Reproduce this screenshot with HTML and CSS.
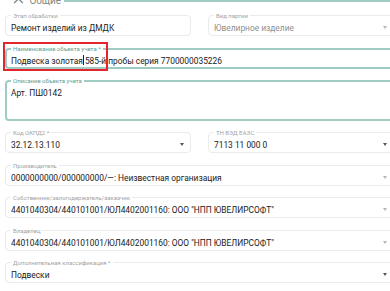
FILE: index.html
```html
<!DOCTYPE html>
<html lang="ru">
<head>
<meta charset="UTF-8">
<meta name="viewport" content="width=device-width, initial-scale=1.0">
<title>Общие</title>
<link rel="stylesheet" href="styles.css">
</head>
<body>

<fieldset class="section">
    <legend class="section-title">
        <svg class="chevron" viewBox="0 0 12 8" width="11" height="7"><path d="M1 7 L6 2 L11 7" fill="none" stroke="#7a8a86" stroke-width="1.6"/></svg>
        Общие
    </legend>

    <div class="form">
        <div class="field">
            <span class="label">Этап обработки</span>
            <div class="value">Ремонт изделий из ДМДК</div>
        </div>
        <div class="field select disabled">
            <span class="label">Вид партии</span>
            <div class="value">Ювелирное изделие</div>
            <span class="arrow"></span>
        </div>

        <div class="field wide focused">
            <span class="label">Наименование объекта учета *</span>
            <div class="value">Подвеска золотая<span class="caret"></span>585-й пробы серия 7700000035226</div>
            <div class="highlight"></div>
        </div>

        <div class="field wide focused textarea">
            <span class="label">Описание объекта учета</span>
            <div class="value">Арт. ПШ0142</div>
        </div>

        <div class="field select required">
            <span class="label">Код ОКПД2 *</span>
            <div class="value">32.12.13.110</div>
            <span class="arrow"></span>
        </div>
        <div class="field select required">
            <span class="label">ТН ВЭД ЕАЭС</span>
            <div class="value">7113 11 000 0</div>
            <span class="arrow"></span>
        </div>

        <div class="field wide select">
            <span class="label">Производитель</span>
            <div class="value">0000000000/000000000/—: Неизвестная организация</div>
            <span class="arrow"></span>
        </div>

        <div class="field wide select">
            <span class="label">Собственник/залогодержатель/заказчик</span>
            <div class="value">4401040304/440101001/ЮЛ4402001160: ООО "НПП ЮВЕЛИРСОФТ"</div>
            <span class="arrow"></span>
        </div>

        <div class="field wide select">
            <span class="label">Владелец</span>
            <div class="value">4401040304/440101001/ЮЛ4402001160: ООО "НПП ЮВЕЛИРСОФТ"</div>
            <span class="arrow"></span>
        </div>

        <div class="field wide select required">
            <span class="label">Дополнительная классификация *</span>
            <div class="value">Подвески</div>
            <span class="arrow"></span>
        </div>
    </div>
</fieldset>

</body>
</html>
```

FILE: styles.css
```css
body {
    margin: 0;
    width: 390px;
    height: 291px;
    overflow: hidden;
    background-color: #ffffff;
    font-family: Roboto, "Noto Sans", sans-serif;
    color: #212121;
}

/* Section "Общие" */
.section {
    margin: -5px 0 0 0;
    padding: 8px 0 0 0;
    width: 420px;
    border: none;
    border-top: 2px solid #9fcbc2;
}
.section-title {
    margin-left: 0;
    padding: 0 3px 0 13px;
    font-size: 10px;
    line-height: 12px;
    color: #7a8a86;
}
.chevron {
    margin-right: 3px;
}

.form {
    display: grid;
    grid-template-columns: 186px 186px;
    column-gap: 17px;
    row-gap: 11.5px;
    padding-left: 5px;
}

/* Outlined field, label sits on the top border */
.field {
    position: relative;
    height: 21px;
    box-sizing: border-box;
    padding: 6px 16px 0 5px;
    border: 1px solid #ebebeb;
    border-radius: 4px;
}
.label {
    position: absolute;
    top: -4px;
    left: 5px;
    padding: 0 2px;
    background-color: #ffffff;
    font-size: 6px;
    line-height: 7px;
    color: #a3a3a3;
    white-space: nowrap;
}
.value {
    font-size: 8.4px;
    line-height: 12px;
    white-space: nowrap;
    overflow: hidden;
}
.wide {
    grid-column: span 2;
}
.disabled .value {
    color: #8f8f8f;
}

.arrow {
    position: absolute;
    right: 6px;
    top: 10px;
    width: 0;
    height: 0;
    border-left: 2.5px solid transparent;
    border-right: 2.5px solid transparent;
    border-top: 3px solid #b8b8b8;
}
.required .arrow {
    border-top-color: #555555;
}

.focused {
    border: 2px solid #9fcbc2;
    padding: 5px 16px 0 4px;
}
.focused .label {
    top: -5px;
    left: 4px;
    color: #5b9e90;
}
.textarea {
    height: 40.5px;
}

.caret {
    display: inline-block;
    width: 1px;
    height: 10px;
    margin: 0 1px -1px 0;
    background-color: #222222;
}

/* Red annotation frame over the focused field */
.highlight {
    position: absolute;
    left: -4px;
    top: -8px;
    width: 101px;
    height: 25px;
    border: 2px solid #e3262b;
}
```
